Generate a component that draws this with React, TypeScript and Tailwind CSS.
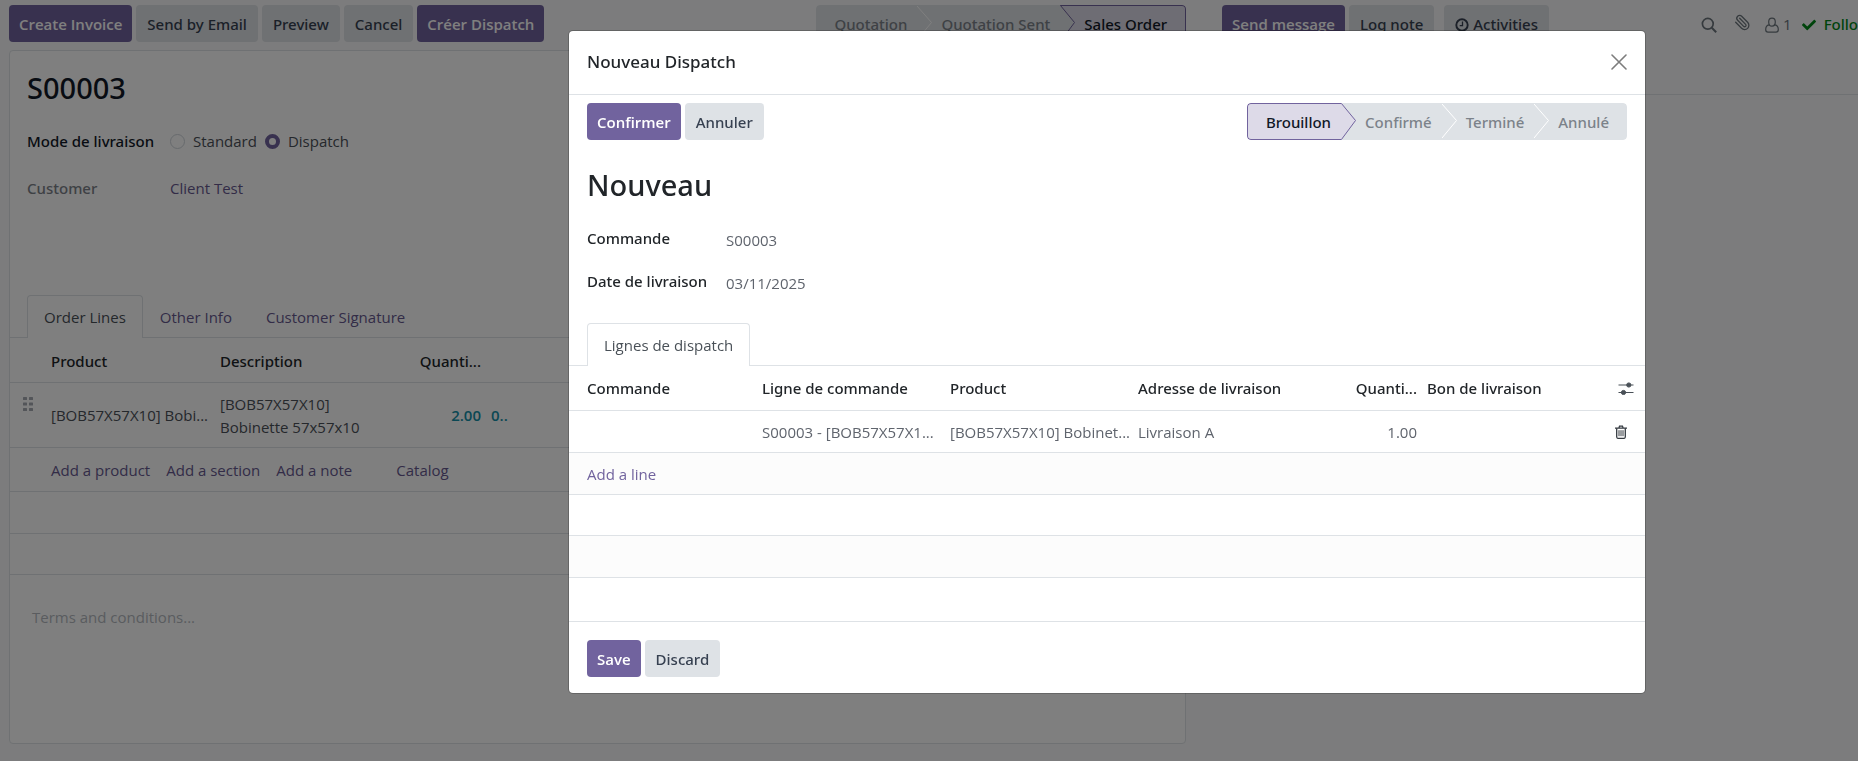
import type { ReactNode } from "react";
import { Paperclip } from "lucide-react";
import { FaCheck } from "react-icons/fa";

function Button({ primary, children }: { primary?: boolean; children: ReactNode }) {
  const tone = primary
    ? "bg-[#71639e] px-2.5 font-semibold text-white"
    : "bg-[#dee2e6] px-[11px] font-['Noto_Sans',sans-serif] font-medium text-[#374151]";
  return (
    <button
      type="button"
      className={`flex h-[37px] items-center gap-1 rounded-[4px] pt-0.5 whitespace-nowrap ${tone}`}
    >
      {children}
    </button>
  );
}

const GREY = "#dee2e6";
const LAVENDER = "#dddae8";

function Chevron({ from, to }: { from: "idle" | "active"; to: "idle" | "active" }) {
  const purple = from === "active" || to === "active";
  return (
    <svg viewBox="0 0 16 37" className="h-[37px] w-4 shrink-0" aria-hidden="true">
      <rect width="16" height="37" fill={to === "active" ? LAVENDER : GREY} />
      {to === "active" && <path d="M0 .5H16M0 36.5H16" stroke="#71639e" fill="none" />}
      <path d="M0 0 15 17.5 0 37Z" fill={from === "active" ? LAVENDER : GREY} />
      <path
        d={purple ? "M.3 .3 14.5 17.5 .3 36.7" : "M0 1 14.5 17.5 0 35"}
        fill="none"
        stroke={purple ? "#71639e" : "#ffffff"}
        strokeWidth="1"
      />
    </svg>
  );
}

function StatusBar({ steps, active }: { steps: string[]; active: number }) {
  return (
    <ol className="flex h-[37px] overflow-hidden rounded-[4px] font-['Noto_Sans',sans-serif] font-medium whitespace-nowrap">
      {steps.map((step, i) => {
        const first = i === 0;
        const last = i === steps.length - 1;
        const on = i === active;
        return (
          <li key={step} className="flex" aria-current={on ? "step" : undefined}>
            <span
              className={[
                "flex items-center pt-0.5",
                first ? "rounded-l-[4px] pl-[18px]" : "pl-2",
                last ? "rounded-r-[4px] pr-[18px]" : "pr-2.5",
                on ? "border-y border-[#71639e] bg-[#dddae8] text-[#111827]" : "bg-[#dee2e6] text-[#7c828a]",
                on && first ? "border-l" : "",
                on && last ? "border-r" : "",
              ].join(" ")}
            >
              {step}
            </span>
            {!last && (
              <Chevron from={on ? "active" : "idle"} to={i + 1 === active ? "active" : "idle"} />
            )}
          </li>
        );
      })}
    </ol>
  );
}

function Tab({ active, children }: { active?: boolean; children: ReactNode }) {
  const tone = active
    ? "rounded-t-[4px] border border-b-0 border-[#dee2e6] bg-white text-[#495057]"
    : "border border-b-0 border-transparent text-[#66598f]";
  return (
    <button type="button" role="tab" aria-selected={!!active} className={`-mb-px h-[43px] px-4 ${tone}`}>
      {children}
    </button>
  );
}

function SearchIcon() {
  return (
    <svg viewBox="0 0 16 16" className="size-4" fill="none" stroke="currentColor" strokeWidth="1.7" aria-hidden="true">
      <circle cx="6.8" cy="6.8" r="5.4" />
      <path d="m10.8 10.8 4.4 4.4" strokeWidth="2" />
    </svg>
  );
}

function UserIcon() {
  return (
    <svg viewBox="0 0 14 16" className="h-4 w-3.5" fill="none" stroke="currentColor" strokeWidth="1.2" aria-hidden="true">
      <path d="M7 1.1c2 0 3.3 1.5 3.3 3.8S9 9.2 7 9.2 3.7 7.2 3.7 4.9 5 1.1 7 1.1Z" />
      <path d="M4 7.8C1.7 8.2.7 10 .7 12.5c0 1.7.8 2.6 2.3 2.6h8c1.5 0 2.3-.9 2.3-2.6 0-2.5-1-4.3-3.3-4.7" />
    </svg>
  );
}

function ClockIcon() {
  return (
    <svg viewBox="0 0 14 14" className="size-3.5" fill="none" stroke="currentColor" aria-hidden="true">
      <circle cx="7" cy="7" r="5.7" strokeWidth="1.9" />
      <path d="M7.5 3.5v4.2H4.7" strokeWidth="1.3" />
    </svg>
  );
}

function TrashIcon() {
  return (
    <svg viewBox="0 0 12 14" className="h-3.5 w-3" fill="none" stroke="currentColor" aria-hidden="true">
      <path d="M0 3.1h12M3.9 3 4.5 1.1h3L8.1 3" strokeWidth="1.2" />
      <path d="M1.7 3.2v8.6c0 .9.4 1.5 1.1 1.5h6.4c.7 0 1.1-.6 1.1-1.5V3.2" strokeWidth="1.3" />
      <path d="M4 5.2v6M6 5.2v6M8 5.2v6" strokeWidth="1" />
    </svg>
  );
}

function SettingsIcon() {
  return (
    <svg viewBox="0 0 16 14" className="h-3.5 w-4" fill="currentColor" stroke="currentColor" aria-hidden="true">
      <path d="M.5 4h15M.5 11.5h15" strokeWidth="1.2" />
      <circle cx="10.8" cy="4" r="2.1" />
      <circle cx="5.5" cy="11.5" r="2.1" />
    </svg>
  );
}

function DragHandle() {
  return (
    <svg viewBox="0 0 10 14" className="h-3.5 w-2.5" fill="#a6abb2" aria-hidden="true">
      {[0, 5.5, 11].map((y) => (
        <g key={y}>
          <rect x="0" y={y} width="4" height="3" rx="0.5" />
          <rect x="6" y={y} width="4" height="3" rx="0.5" />
        </g>
      ))}
    </svg>
  );
}

function ModeOption({ label, checked }: { label: string; checked?: boolean }) {
  return (
    <label className="flex items-center gap-2">
      <input
        type="radio"
        name="mode"
        defaultChecked={checked}
        className="size-[15px] appearance-none rounded-full border border-[#ced4da] bg-white checked:border-4 checked:border-[#71639e]"
      />
      {label}
    </label>
  );
}

function OrderSheet() {
  return (
    <main className="w-[64%] shrink-0 pr-[3px] pl-[9px]">
      <div className="flex justify-between pt-[5px] pb-2">
        <div className="flex gap-1">
          <Button primary>Create Invoice</Button>
          <Button>Send by Email</Button>
          <Button>Preview</Button>
          <Button>Cancel</Button>
          <Button primary>Créer Dispatch</Button>
        </div>
        <StatusBar steps={["Quotation", "Quotation Sent", "Sales Order"]} active={2} />
      </div>

      <section className="rounded-[4px] border border-[#dee2e6] bg-white">
        <h1 className="px-[17px] pt-[15px] font-['Noto_Sans',sans-serif] text-[29px] leading-[44px] font-medium text-[#111827]">
          S00003
        </h1>

        <div className="grid grid-cols-[143px_1fr] gap-y-6 px-[17px] pt-5 leading-[23px]">
          <span id="mode" className="font-['Noto_Sans',sans-serif] font-medium text-[#111827]">Mode de livraison</span>
          <div role="radiogroup" aria-labelledby="mode" className="flex gap-2 text-[#4b5058]">
            <ModeOption label="Standard" />
            <ModeOption label="Dispatch" checked />
          </div>
          <span className="font-['Noto_Sans',sans-serif] font-medium text-[#7c828a]">Customer</span>
          <a href="#customer" className="text-[#66598f]">Client Test</a>
        </div>

        <div role="tablist" className="mt-[95px] flex border-b border-[#dee2e6] px-[17px]">
          <Tab active>Order Lines</Tab>
          <Tab>Other Info</Tab>
          <Tab>Customer Signature</Tab>
        </div>

        <table className="w-full table-fixed [&_td]:pt-0.5 [&_th]:pt-0.5">
          <colgroup>
            <col className="w-[41px]" />
            <col className="w-[169px]" />
            <col className="w-[190px]" />
            <col className="w-[71px]" />
            <col />
          </colgroup>
          <thead>
            <tr className="h-11 border-b border-[#dee2e6] text-left font-['Noto_Sans',sans-serif] text-[#212529]">
              <th />
              <th className="font-medium">Product</th>
              <th className="font-medium">Description</th>
              <th className="text-right font-medium">Quanti...</th>
              <th />
            </tr>
          </thead>
          <tbody className="text-[#4b5058]">
            <tr className="h-[65px] border-b border-[#dee2e6]">
              <td className="pl-[13px] align-top">
                <div className="pt-3"><DragHandle /></div>
              </td>
              <td className="whitespace-nowrap">[BOB57X57X10] Bobi...</td>
              <td className="leading-[23px]">[BOB57X57X10]<br />Bobinette 57x57x10</td>
              <td className="text-right font-semibold text-[#1490a8]">2.00</td>
              <td className="pl-2.5 font-semibold text-[#1490a8]">0..</td>
            </tr>
            <tr className="h-11 border-b border-[#dee2e6]">
              <td />
              <td colSpan={4} className="text-[#66598f]">
                <div className="flex">
                  <a href="#product">Add a product</a>
                  <a href="#section" className="ml-4">Add a section</a>
                  <a href="#note" className="ml-4">Add a note</a>
                  <a href="#catalog" className="ml-11">Catalog</a>
                </div>
              </td>
            </tr>
            <tr className="h-[42px] border-b border-[#dee2e6]"><td colSpan={5} /></tr>
            <tr className="h-[41px] border-b border-[#dee2e6]"><td colSpan={5} /></tr>
          </tbody>
        </table>

        <textarea
          aria-label="Terms and conditions"
          placeholder="Terms and conditions..."
          className="mt-[31px] block h-[137px] w-full resize-none px-[22px] leading-[23px] outline-none placeholder:text-[#b4b9bf]"
        />
      </section>
    </main>
  );
}

function Chatter() {
  return (
    <aside className="min-w-0 flex-1">
      <div className="flex h-[95px] items-start gap-1 border-b border-[#dee2e6] pt-[5px] pl-[33px]">
        <Button primary>Send message</Button>
        <Button>Log note</Button>
        <span className="ml-1.5">
          <Button><ClockIcon />Activities</Button>
        </span>
        <div className="ml-auto flex h-[37px] items-center pt-0.5 text-[#6c757d]">
          <button type="button" aria-label="Search messages" className="mr-[17px]"><SearchIcon /></button>
          <button type="button" aria-label="Attach files" className="mr-3.5 -scale-x-100 pb-1">
            <Paperclip className="size-[17px]" strokeWidth={1.8} />
          </button>
          <button type="button" className="mr-2.5 flex items-center gap-1"><UserIcon />1</button>
          <button type="button" className="flex items-center gap-2 font-['Noto_Sans',sans-serif] font-medium text-[#008818]">
            <FaCheck className="size-3.5" />Follo
          </button>
        </div>
      </div>
    </aside>
  );
}

function DispatchLines() {
  return (
    <table className="w-full table-fixed [&_td]:pt-0.5">
      <colgroup>
        <col className="w-[193px]" />
        <col className="w-[188px]" />
        <col className="w-[188px]" />
        <col />
        <col className="w-[70px]" />
        <col className="w-[183px]" />
        <col className="w-[45px]" />
      </colgroup>
      <thead>
        <tr className="h-11 border-b border-[#dee2e6] text-left font-['Noto_Sans',sans-serif] text-[#212529]">
          <th className="pl-[18px] font-medium">Commande</th>
          <th className="font-medium">Ligne de commande</th>
          <th className="font-medium">Product</th>
          <th className="font-medium">Adresse de livraison</th>
          <th className="text-right font-medium">Quanti...</th>
          <th className="pl-2.5 font-medium">Bon de livraison</th>
          <th className="pl-[18px] text-[#495057]">
            <button type="button" aria-label="Optional columns" className="block"><SettingsIcon /></button>
          </th>
        </tr>
      </thead>
      <tbody className="whitespace-nowrap text-[#5f646d]">
        <tr className="h-[42px] border-b border-[#dee2e6]">
          <td />
          <td>S00003 - [BOB57X57X1...</td>
          <td>[BOB57X57X10] Bobinet...</td>
          <td>Livraison A</td>
          <td className="text-right">1.00</td>
          <td />
          <td className="pl-[15px] text-[#343a40]">
            <button type="button" aria-label="Delete line" className="block"><TrashIcon /></button>
          </td>
        </tr>
        <tr className="h-[42px] border-b border-[#dee2e6] bg-[#fcfcfc]">
          <td colSpan={7} className="pl-[18px]"><a href="#line" className="text-[#71639e]">Add a line</a></td>
        </tr>
        <tr className="h-[41px] border-b border-[#dee2e6]"><td colSpan={7} /></tr>
        <tr className="h-[42px] border-b border-[#dee2e6] bg-[#fcfcfc]"><td colSpan={7} /></tr>
        <tr className="h-11"><td colSpan={7} /></tr>
      </tbody>
    </table>
  );
}

function DispatchDialog() {
  return (
    <div className="fixed inset-0 flex items-start bg-black/50 pt-[30px] pr-[212px] pl-[568px]">
      <div
        role="dialog"
        aria-modal="true"
        aria-labelledby="dialog-title"
        className="min-w-0 flex-1 overflow-hidden rounded-[5px] border border-black/20 bg-white bg-clip-padding"
      >
        <header className="flex h-16 items-center justify-between border-b border-[#dee2e6] px-[18px] pb-0.5">
          <h2 id="dialog-title" className="font-['Noto_Sans',sans-serif] text-[17px] font-medium text-[#212529]">
            Nouveau Dispatch
          </h2>
          <button type="button" aria-label="Close" className="text-[#7d7d7d]">
            <svg viewBox="0 0 16 16" className="size-4" stroke="currentColor" strokeWidth="1.6" strokeLinecap="round" aria-hidden="true">
              <path d="m1 1 14 14M15 1 1 15" />
            </svg>
          </button>
        </header>

        <div className="flex justify-between px-[18px] pt-2">
          <div className="flex gap-1">
            <Button primary>Confirmer</Button>
            <Button>Annuler</Button>
          </div>
          <StatusBar steps={["Brouillon", "Confirmé", "Terminé", "Annulé"]} active={0} />
        </div>

        <h1 className="px-[18px] pt-[23px] font-['Noto_Sans',sans-serif] text-[29px] leading-[44px] font-medium text-[#212529]">
          Nouveau
        </h1>

        <div className="grid grid-cols-[139px_1fr] gap-y-5 px-[18px] pt-5 leading-[23px]">
          <label htmlFor="order" className="font-['Noto_Sans',sans-serif] font-medium text-[#212529]">Commande</label>
          <input id="order" defaultValue="S00003" className="h-[23px] translate-y-0.5 text-[#5f646d] outline-none" />
          <label htmlFor="date" className="font-['Noto_Sans',sans-serif] font-medium text-[#212529]">Date de livraison</label>
          <input id="date" defaultValue="03/11/2025" className="h-[23px] translate-y-0.5 text-[#5f646d] outline-none" />
        </div>

        <div role="tablist" className="mt-[30px] flex border-b border-[#dee2e6] px-[18px]">
          <Tab active>Lignes de dispatch</Tab>
        </div>
        <DispatchLines />

        <footer className="flex gap-1 border-t border-[#dee2e6] px-[18px] pt-[18px] pb-4">
          <Button primary>Save</Button>
          <Button>Discard</Button>
        </footer>
      </div>
    </div>
  );
}

export default function App() {
  return (
    <div className="flex min-h-screen overflow-hidden bg-[#f8f9fa] font-['Open_Sans',sans-serif] text-[15px]">
      <OrderSheet />
      <Chatter />
      <DispatchDialog />
    </div>
  );
}
